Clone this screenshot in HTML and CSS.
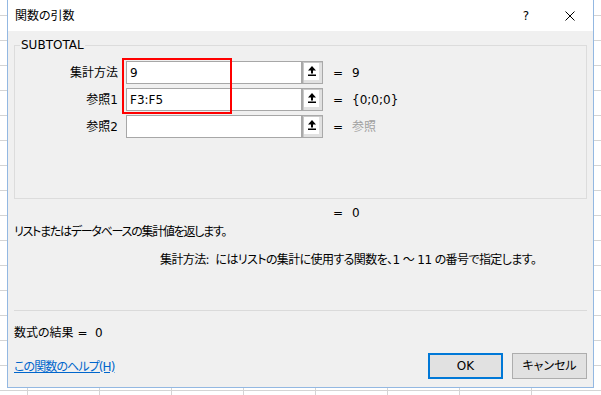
FILE: index.html
```html
<!DOCTYPE html>
<html lang="ja">
<head>
<meta charset="utf-8">
<title>関数の引数</title>
<link rel="stylesheet" href="styles.css">
</head>
<body>
<div class="dialog">
  <div class="titlebar">
    <span class="title">関数の引数</span>
    <span class="cap-btn help">?</span>
    <span class="cap-btn close">
      <svg width="10" height="10" viewBox="0 0 10 10"><path d="M0.5 0.5 L9.5 9.5 M9.5 0.5 L0.5 9.5" stroke="#000" stroke-width="1" fill="none"/></svg>
    </span>
  </div>
  <div class="content">
    <div class="group">
      <span class="legend">SUBTOTAL</span>
      <div class="args">
        <div class="label">集計方法</div>
        <div class="field">9</div>
        <div class="pick"><svg width="8" height="10" viewBox="0 0 8 10"><path d="M4 0 L8 4.5 L5 4.5 L5 7.5 L3 7.5 L3 4.5 L0 4.5 Z M0 8.5 H8 V10 H0 Z" fill="#000"/></svg></div>
        <div class="eq">=</div>
        <div class="val">9</div>

        <div class="label">参照1</div>
        <div class="field">F3:F5</div>
        <div class="pick"><svg width="8" height="10" viewBox="0 0 8 10"><path d="M4 0 L8 4.5 L5 4.5 L5 7.5 L3 7.5 L3 4.5 L0 4.5 Z M0 8.5 H8 V10 H0 Z" fill="#000"/></svg></div>
        <div class="eq">=</div>
        <div class="val">{0;0;0}</div>

        <div class="label">参照2</div>
        <div class="field"></div>
        <div class="pick"><svg width="8" height="10" viewBox="0 0 8 10"><path d="M4 0 L8 4.5 L5 4.5 L5 7.5 L3 7.5 L3 4.5 L0 4.5 Z M0 8.5 H8 V10 H0 Z" fill="#000"/></svg></div>
        <div class="eq">=</div>
        <div class="val muted">参照</div>
      </div>
    </div>
    <div class="result-line"><span class="eq2">=</span><span>0</span></div>
    <div class="desc">リストまたはデータベースの集計値を返します。</div>
    <div class="argdesc">集計方法:&nbsp;&nbsp;にはリストの集計に使用する関数を、1 ～ 11 の番号で指定します。</div>
    <div class="sep"></div>
    <div class="formula">数式の結果 =&nbsp;&nbsp;0</div>
    <div class="footer">
      <a class="helplink" href="#">この関数のヘルプ(H)</a>
      <button class="btn ok">OK</button>
      <button class="btn">キャンセル</button>
    </div>
  </div>
  <div class="highlight"></div>
</div>
</body>
</html>
```
FILE: styles.css
```css
html, body {
  margin: 0;
  padding: 0;
}
body {
  width: 601px;
  height: 395px;
  overflow: hidden;
  background-color: #ffffff;
  background-image:
    linear-gradient(to bottom, #d4d4d4 1px, transparent 1px),
    linear-gradient(to right, #d4d4d4 1px, transparent 1px);
  background-size: 100% 25px, 72px 100%;
  background-position: 0 15px, 27px 0;
  font-family: "DejaVu Sans", "Noto Sans CJK JP", sans-serif;
  font-size: 12px;
  line-height: 16px;
  color: #000;
  font-feature-settings: "palt" 1;
}
.dialog {
  position: relative;
  box-sizing: border-box;
  margin-left: 7px;
  width: 587px;
  height: 388px;
  background: #f0f0f0;
  border: 1px solid #93b8e2;
  border-top: none;
}
.titlebar {
  height: 31px;
  background: #fff;
  display: flex;
  align-items: center;
  padding-left: 7px;
}
.title {
  flex: 1;
}
.cap-btn {
  width: 46px;
  height: 31px;
  display: flex;
  align-items: center;
  justify-content: center;
}
.help {
  font-size: 12px;
  padding-left: 4px;
  box-sizing: border-box;
}
.content {
  padding: 0 6px;
}
.group {
  position: relative;
  margin-top: 14px;
  height: 154px;
  box-sizing: border-box;
  border: 1px solid #dcdcdc;
  padding-top: 15px;
}
.legend {
  position: absolute;
  left: 5px;
  top: -9px;
  padding: 0 1px;
  background: #f0f0f0;
}
.args {
  display: grid;
  grid-template-columns: 111px 176px 21px 29px auto;
  grid-auto-rows: 23px;
  row-gap: 4px;
  align-items: center;
}
.label {
  text-align: right;
  padding-right: 8px;
}
.field {
  box-sizing: border-box;
  height: 23px;
  background: #fff;
  border: 1px solid #a7a7a7;
  padding: 3px 3px 0;
}
.pick {
  box-sizing: border-box;
  height: 23px;
  border: 1px solid #a9a9a9;
  background: #fff;
  box-shadow: inset 1px 1px 0 #c9c9c9, inset -3px -3px 0 #e1e1e1;
  display: flex;
  align-items: flex-start;
  justify-content: center;
  padding-top: 4px;
  padding-right: 2px;
}
.eq {
  padding-left: 10px;
}
.muted {
  color: #a0a0a0;
}
.result-line {
  margin-top: 6px;
  padding-left: 319px;
}
.eq2 {
  display: inline-block;
  width: 19px;
}
.desc {
  margin-top: 3px;
  letter-spacing: -1.25px;
}
.argdesc {
  margin-top: 12px;
  padding-left: 146px;
  letter-spacing: -0.6px;
}
.sep {
  margin-top: 42px;
  height: 1px;
  background: #dadada;
}
.formula {
  margin-top: 14px;
}
.footer {
  margin-top: 12px;
  display: flex;
  align-items: center;
  height: 26px;
}
.helplink {
  color: #0066cc;
  text-decoration: underline;
  margin-right: auto;
  padding-top: 2px;
  letter-spacing: -0.9px;
}
.btn {
  box-sizing: border-box;
  width: 75px;
  height: 26px;
  margin: 0 0 0 9px;
  padding: 0;
  background: #e1e1e1;
  border: 1px solid #adadad;
  font: inherit;
  color: #000;
}
.btn.ok {
  border: 2px solid #0078d7;
}
.highlight {
  position: absolute;
  left: 114px;
  top: 58px;
  width: 110px;
  height: 56px;
  box-sizing: border-box;
  border: 2px solid #ff0000;
}
```
